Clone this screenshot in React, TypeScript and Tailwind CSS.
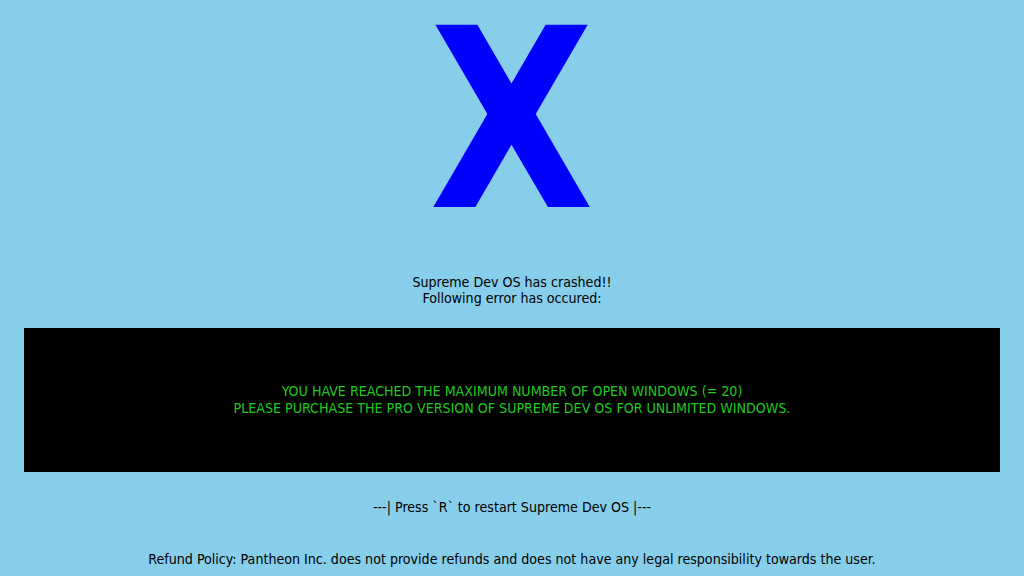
export default function App() {
  return (
    <div
      className="flex h-[576px] w-[1024px] flex-col items-center overflow-hidden bg-[#87ceeb] text-[14.1px] leading-[16px] text-black"
      style={{ fontFamily: '"DejaVu Sans", sans-serif', fontStretch: 'condensed' }}
    >
      <div className="mt-[-7px] h-[256px] scale-x-95 text-[250px] font-bold leading-[256px] text-[#0000ff]">
        X
      </div>
      <div className="mt-[25px] text-center">
        <p>Supreme Dev OS has crashed!!</p>
        <p>Following error has occured:</p>
      </div>
      <div className="mt-[22px] flex h-[144px] w-[976px] flex-col items-center justify-center bg-black text-center leading-[17px] text-[#1ec81e]">
        <p>YOU HAVE REACHED THE MAXIMUM NUMBER OF OPEN WINDOWS (= 20)</p>
        <p>PLEASE PURCHASE THE PRO VERSION OF SUPREME DEV OS FOR UNLIMITED WINDOWS.</p>
      </div>
      <p className="mt-[27px]">---| Press `R` to restart Supreme Dev OS |---</p>
      <p className="mt-[36px]">
        Refund Policy: Pantheon Inc. does not provide refunds and does not have any legal responsibility towards the user.
      </p>
    </div>
  );
}
